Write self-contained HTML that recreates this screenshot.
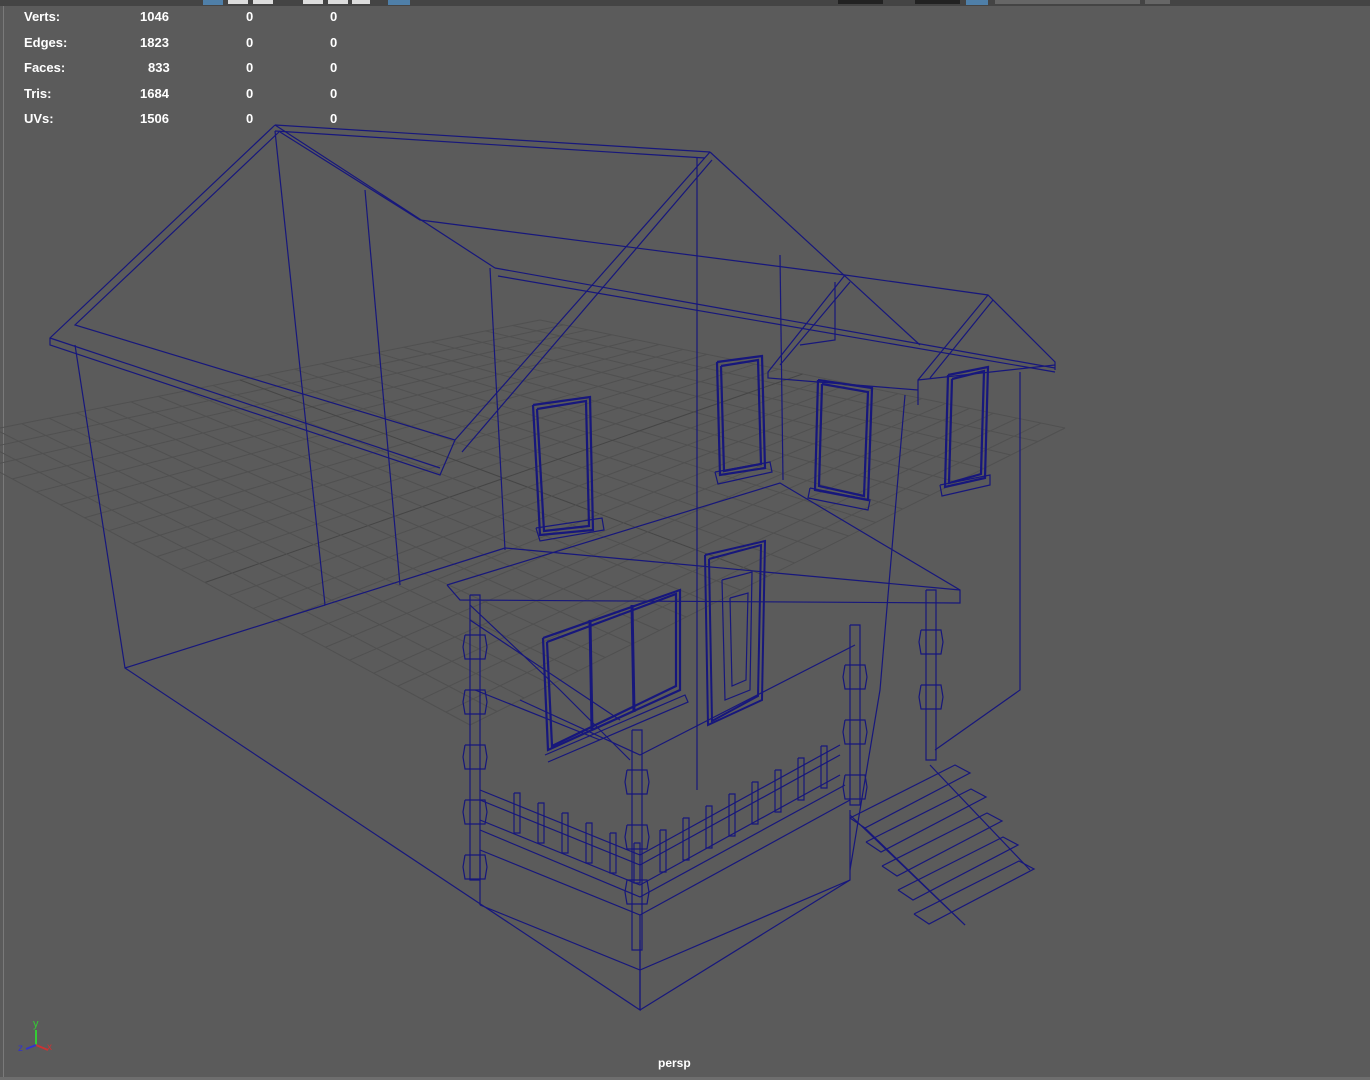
<!DOCTYPE html>
<html><head><meta charset="utf-8"><style>
html,body{margin:0;padding:0;width:1370px;height:1080px;overflow:hidden;background:#5b5b5b;font-family:"Liberation Sans",sans-serif}
#top{position:absolute;left:0;top:0;width:1370px;height:6px;background:#444}
#lb{position:absolute;left:3px;top:6px;width:1px;height:1072px;background:#7a7a7a}
#bb{position:absolute;left:0;top:1077px;width:1370px;height:3px;background:#6e6e6e}
.st{position:absolute;color:#fff;font-size:13px;font-weight:bold}
svg{position:absolute;left:0;top:0}
</style></head><body>
<div id="top"></div>
<svg width="1370" height="6">
<rect x="203" y="0" width="20" height="5" fill="#4f7fa8"/><rect x="228" y="0" width="20" height="4" fill="#ddd"/><rect x="253" y="0" width="20" height="4" fill="#ddd"/><rect x="303" y="0" width="20" height="4" fill="#ddd"/><rect x="328" y="0" width="20" height="4" fill="#ddd"/><rect x="352" y="0" width="18" height="4" fill="#ddd"/>
<rect x="388" y="0" width="22" height="5" fill="#4f7fa8"/><rect x="838" y="0" width="45" height="4" fill="#222"/><rect x="915" y="0" width="45" height="4" fill="#222"/><rect x="966" y="0" width="22" height="5" fill="#4f7fa8"/><rect x="995" y="0" width="145" height="4" fill="#666"/><rect x="1145" y="0" width="25" height="4" fill="#666"/>
</svg>
<div id="lb"></div><div id="bb"></div>
<svg id="g" width="1370" height="1080"></svg>
<div class="st" style="left:24px;top:9px">Verts:</div><div class="st" style="left:140px;top:9px">1046</div><div class="st" style="left:246px;top:9px">0</div><div class="st" style="left:330px;top:9px">0</div>
<div class="st" style="left:24px;top:35px">Edges:</div><div class="st" style="left:140px;top:35px">1823</div><div class="st" style="left:246px;top:35px">0</div><div class="st" style="left:330px;top:35px">0</div>
<div class="st" style="left:24px;top:60px">Faces:</div><div class="st" style="left:148px;top:60px">833</div><div class="st" style="left:246px;top:60px">0</div><div class="st" style="left:330px;top:60px">0</div>
<div class="st" style="left:24px;top:86px">Tris:</div><div class="st" style="left:140px;top:86px">1684</div><div class="st" style="left:246px;top:86px">0</div><div class="st" style="left:330px;top:86px">0</div>
<div class="st" style="left:24px;top:111px">UVs:</div><div class="st" style="left:140px;top:111px">1506</div><div class="st" style="left:246px;top:111px">0</div><div class="st" style="left:330px;top:111px">0</div>
<div class="st" style="left:658px;top:1056px;font-size:12px">persp</div>
<svg width="70" height="60" style="left:10px;top:1010px">
<text x="23" y="17" fill="#3c3" font-size="11" font-family="Liberation Sans">y</text>
<line x1="26" y1="20" x2="26" y2="35" stroke="#3c3" stroke-width="2"/>
<line x1="26" y1="35" x2="38" y2="40" stroke="#c33" stroke-width="2"/><text x="37" y="40" fill="#c33" font-size="10">x</text>
<line x1="26" y1="35" x2="16" y2="39" stroke="#33c" stroke-width="2"/><text x="8" y="41" fill="#33c" font-size="10">z</text>
</svg>
<script>
const g=document.getElementById('g');const NS='http://www.w3.org/2000/svg';
function L(a,c,w){const p=document.createElementNS(NS,'polyline');p.setAttribute('points',a.join(' '));p.setAttribute('fill','none');p.setAttribute('stroke',c||'#17177c');p.setAttribute('stroke-width',w||1.2);g.appendChild(p);}
function Q(a,w){L([...a,a[0],a[1]],null,w);}
const B=[540,320],R=[1065,428],F=[470,725],Lf=[-60,440];
function lerp(p,q,t){return [p[0]+(q[0]-p[0])*t,p[1]+(q[1]-p[1])*t];}
const N=22;
for(let i=0;i<=N;i++){const t=i/N;const c=(i==11)?'#454545':'#505050';
const a=lerp(B,R,t),b=lerp(Lf,F,t);L([a[0],a[1],b[0],b[1]],c,1);
const d=lerp(B,Lf,t),e=lerp(R,F,t);L([d[0],d[1],e[0],e[1]],c,1);}
L([275,125,710,152]);L([275,131,705,158]);
L([275,125,50,338,50,345,440,475,455,440,75,325,280,131]);
L([50,338,440,468]);
L([710,152,455,440]);L([712,160,462,452]);
L([275,125,495,268]);L([280,132,420,220,845,275]);L([495,268,1055,368]);L([498,276,1055,372]);
L([710,152,920,345]);L([845,275,988,295,1055,362,1055,370]);
L([845,275,768,372,768,378,918,390]);L([850,282,780,365]);L([835,282,835,340,800,345]);
L([988,295,918,380,918,405]);L([993,300,930,378]);L([918,380,1055,365]);
L([75,345,125,668,640,1010,640,940]);L([640,1010,850,880,850,810]);
L([275,131,325,605,505,548]);L([365,190,400,585]);L([490,268,505,550]);L([325,605,125,668]);
L([697,158,697,790]);L([780,255,783,480]);L([1020,372,1020,690,935,750]);L([905,395,880,690,850,870]);
L([447,585,780,483,960,590,960,603,460,600,447,585]);
L([505,548,960,590]);
function win(a,w){Q(a,w);Q([a[0]+4,a[1]+4,a[2]-4,a[3]+4,a[4]-4,a[5]-4,a[6]+4,a[7]-4],w);}
win([533,405,590,397,593,530,540,535],2.2);L([536,528,602,518,604,530,540,541,536,528]);
win([717,362,762,356,765,468,720,475],2.2);L([715,472,770,462,772,472,718,484,715,472]);
win([818,380,872,388,868,500,815,490],2.2);L([810,488,870,500,868,510,808,498,810,488]);
win([948,375,988,367,985,478,945,487],2.2);L([940,485,990,475,990,485,942,496,940,485]);
win([705,555,765,541,762,700,708,725],2);Q([722,580,752,572,750,690,725,700]);Q([730,598,748,593,746,680,732,686]);
win([543,638,680,590,680,690,548,750],2.2);L([590,620,592,730],null,3);L([632,605,634,712],null,3);L([545,755,685,695,688,702,548,762]);
L([470,605,560,690,630,760]);L([470,620,620,720]);
L([480,790,640,855,840,745]);L([480,800,640,865,840,755]);L([480,820,640,885,840,775]);L([480,830,640,897,845,785]);
L([480,850,640,915,850,800]);L([480,905,640,970,850,880]);L([480,850,480,905]);L([640,915,640,1010]);
L([520,700,640,755,855,645]);L([475,690,600,740]);
function post(x,y1,y2){Q([x-5,y1,x+5,y1,x+5,y2,x-5,y2]);for(let y=y1+40;y<y2-20;y+=55){Q([x-10,y,x+10,y,x+12,y+12,x+10,y+24,x-10,y+24,x-12,y+12]);}}
post(475,595,880);post(637,730,950);post(855,625,805);post(931,590,760);
for(let i=0;i<6;i++){const x=517+i*24,y=793+i*10;Q([x-3,y,x+3,y,x+3,y+40,x-3,y+40]);}
for(let i=0;i<8;i++){const x=663+i*23,y=830-i*12;Q([x-3,y,x+3,y,x+3,y+42,x-3,y+42]);}
for(let i=0;i<5;i++){const dx=i*16,dy=i*24;L([850+dx,818+dy,955+dx,765+dy,970+dx,773+dy,865+dx,828+dy,850+dx,818+dy]);}
L([850,815,965,925]);L([930,765,1030,870]);L([865,828,965,925]);
</script>
</body></html>
